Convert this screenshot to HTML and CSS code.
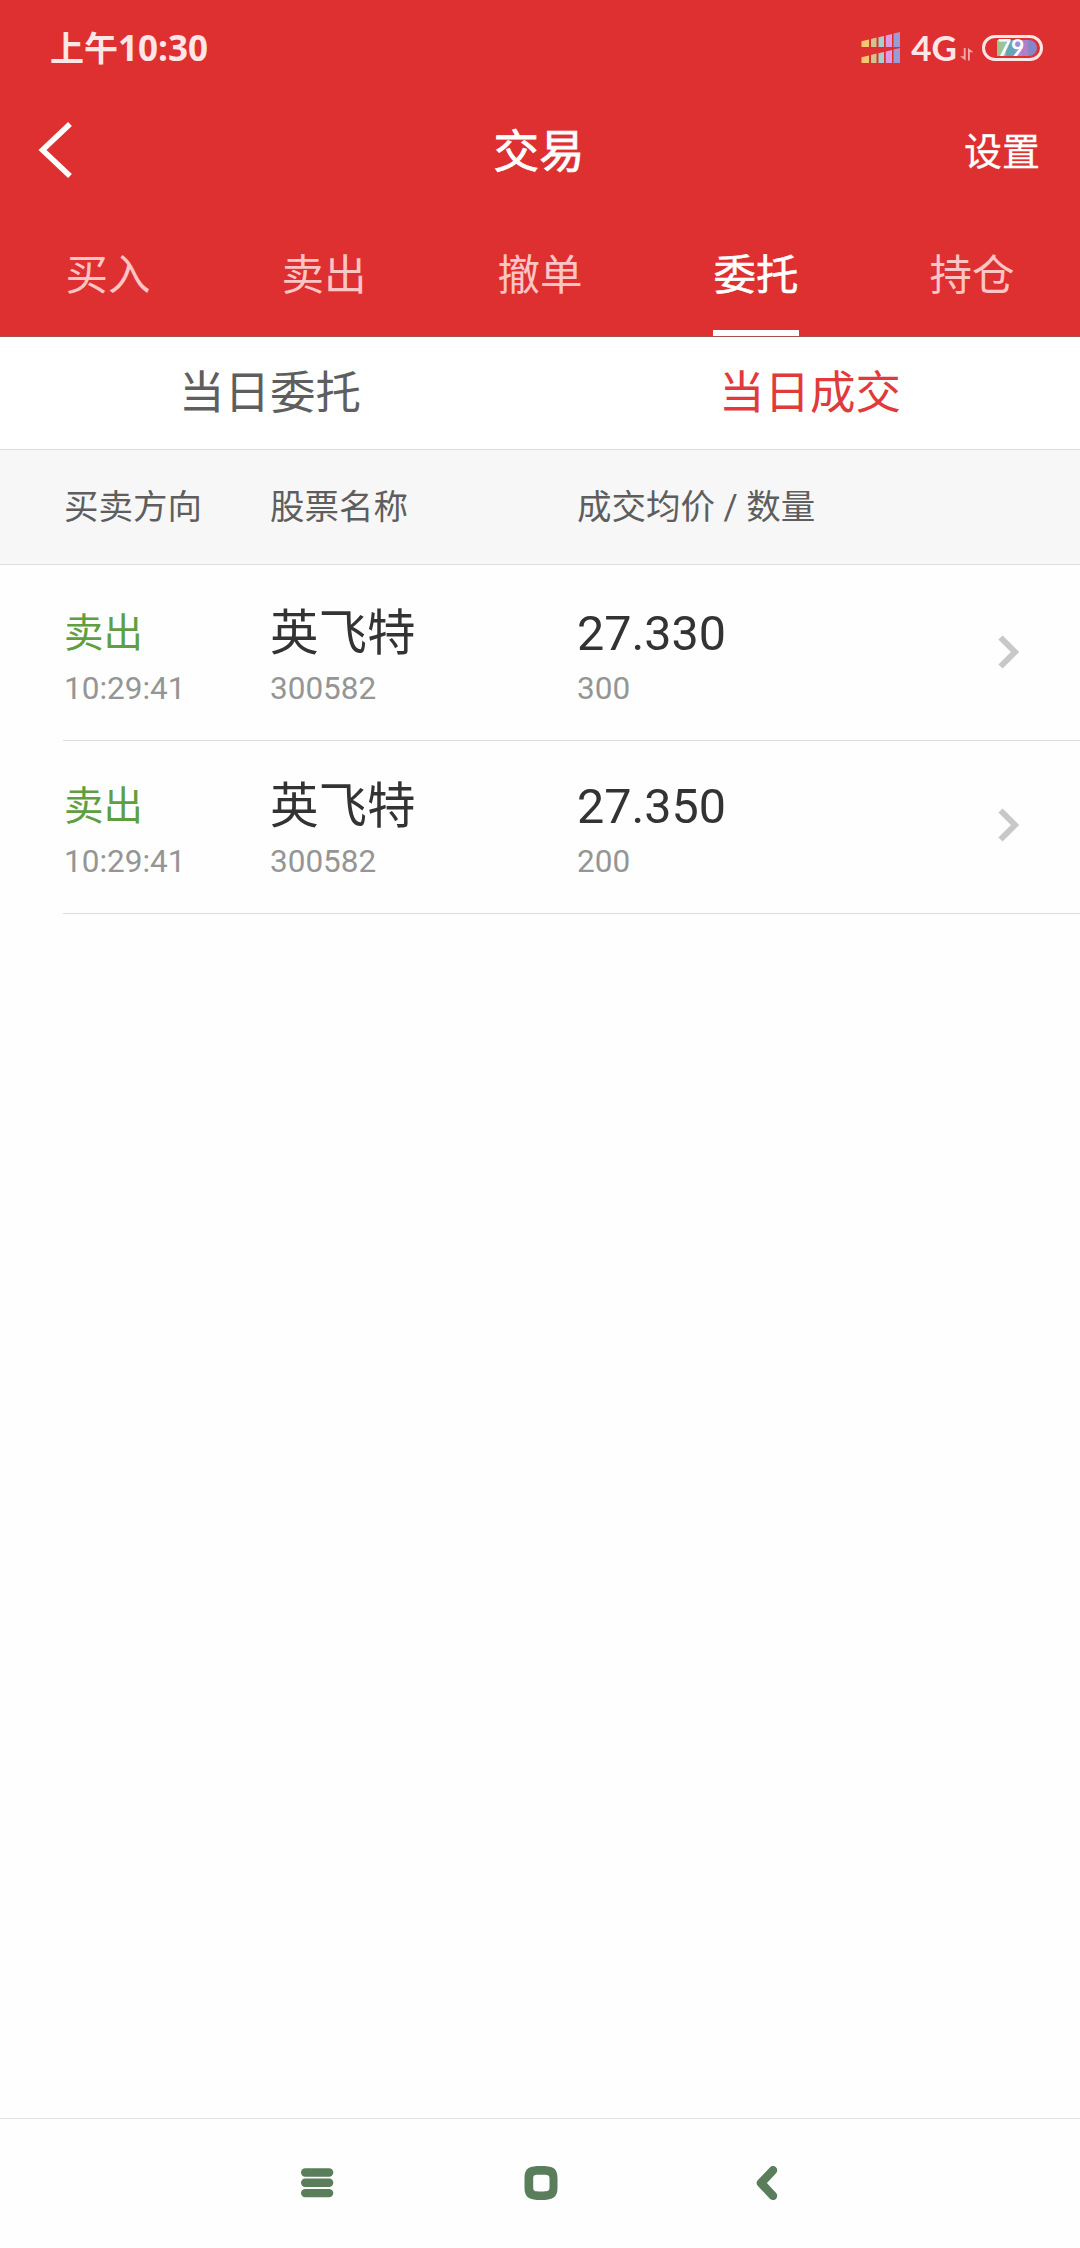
FILE: index.html
```html
<!DOCTYPE html>
<html lang="zh-CN">
  <head>
    <meta charset="UTF-8" />
    <meta name="viewport" content="width=device-width, initial-scale=1.0" />
    <title>交易</title>
    <link rel="stylesheet" href="styles.css">
  </head>

  <body>
    <header class="header">
      <!-- Status Bar -->
      <div class="status-bar">
        <div class="status-time">上午<span class="latin">10:30</span></div>
        <div class="status-icons">
          <svg class="signal" width="39" height="32" viewBox="0 0 39 32">
            <path fill="#f9c66f" d="M0.5 9.2 8 7.5V15H.5zM0.5 25.2 8 23.5V31H.5z" />
            <path fill="#cfc58d" d="M10 7 15.500 5.500V15H10zM10 23 15.500 21.500V31H10z" />
            <path fill="#a9cfcb" d="M17.500 5.200 23 4V15h-5.500zM17.500 21.200 23 20V31h-5.500z" />
            <path fill="#dd9be0" d="M24.800 3.400 31 2V15h-6.200zM24.800 19.400 31 18V31h-6.200z" />
            <path fill="#9c9bd6" d="M32.500 1.600 39 0V15h-6.500zM32.500 17.600 39 16V31h-6.500z" />
          </svg>
          <span class="network">4G</span>
          <svg class="traffic" width="14" height="13" viewBox="0 0 14 13">
            <path fill="#f5a9aa" d="M3.800 0H5.600V12.500L0 8.200H3.800zM8 0 13.500 4.300H9.800V12.500H8z" />
          </svg>
          <div class="battery">
            <div class="battery-level"></div>
            <span class="battery-text">79</span>
          </div>
        </div>
      </div>

      <!-- Title Bar -->
      <div class="title-bar">
        <svg class="back" width="36" height="58" viewBox="0 0 36 58">
          <path fill="none" stroke="#fff" stroke-width="5.500" d="M32 3 4.500 29 32 55" />
        </svg>
        <h1>交易</h1>
        <a class="settings">设置</a>
      </div>

      <!-- Main Tabs -->
      <nav class="tabs">
        <a class="tab"><span>买入</span></a>
        <a class="tab"><span>卖出</span></a>
        <a class="tab"><span>撤单</span></a>
        <a class="tab active"><span>委托</span></a>
        <a class="tab"><span>持仓</span></a>
      </nav>
    </header>

    <!-- Sub Tabs -->
    <div class="sub-tabs">
      <a class="sub-tab">当日委托</a>
      <a class="sub-tab active">当日成交</a>
    </div>

    <div class="list-head">
      <span>买卖方向</span>
      <span>股票名称</span>
      <span>成交均价 / 数量</span>
    </div>

    <!-- Deal List -->
    <main class="list">
      <div class="row">
        <div class="cell">
          <div class="main side">卖出</div>
          <div class="sub">10:29:41</div>
        </div>
        <div class="cell">
          <div class="main">英飞特</div>
          <div class="sub">300582</div>
        </div>
        <div class="cell">
          <div class="main">27.330</div>
          <div class="sub">300</div>
        </div>
        <svg class="chevron" width="22" height="34" viewBox="0 0 22 34">
          <path fill="none" stroke="#c8c8c8" stroke-width="6" d="M2.500 2.500 17 17 2.500 31.500" />
        </svg>
      </div>
      <div class="row">
        <div class="cell">
          <div class="main side">卖出</div>
          <div class="sub">10:29:41</div>
        </div>
        <div class="cell">
          <div class="main">英飞特</div>
          <div class="sub">300582</div>
        </div>
        <div class="cell">
          <div class="main">27.350</div>
          <div class="sub">200</div>
        </div>
        <svg class="chevron" width="22" height="34" viewBox="0 0 22 34">
          <path fill="none" stroke="#c8c8c8" stroke-width="6" d="M2.500 2.500 17 17 2.500 31.500" />
        </svg>
      </div>
    </main>

    <!-- System Navigation -->
    <footer class="nav-bar">
      <svg width="34" height="34" viewBox="0 0 34 34">
        <g fill="#5a7d5c">
          <rect x="1" y="2.300" width="32.300" height="8.400" rx="4.200" />
          <rect x="1" y="12.600" width="32.300" height="8.400" rx="4.200" />
          <rect x="1" y="22.900" width="32.300" height="8.400" rx="4.200" />
        </g>
      </svg>
      <svg width="34" height="34" viewBox="0 0 34 34">
        <path fill="#5a7d5c" fill-rule="evenodd" d="M17 0C28 0 33.500 1.500 33.500 12V22C33.500 32 28 34 17 34S.5 32 .5 22V12C.5 1.500 6 0 17 0zM17 8.800C10 8.800 9.200 9 9.200 13V21C9.200 25 10 25.500 17 25.500S25.500 25 25.500 21V13C25.500 9 24 8.800 17 8.800z" />
      </svg>
      <svg width="34" height="34" viewBox="0 0 34 34">
        <path fill="none" stroke="#5a7d5c" stroke-width="8.500" stroke-linecap="round" stroke-linejoin="round" d="M26 4.300 14 17 26 29.800" />
      </svg>
    </footer>
  </body>
</html>
```

FILE: styles.css
```css
/* Global Styles */
* {
  box-sizing: border-box;
}

body {
  font-family: Roboto, "Noto Sans CJK SC", sans-serif;
  background-color: #fefefe;
  color: #333;
  margin: 0;
  min-height: 100vh;
  display: flex;
  flex-direction: column;
}

svg {
  display: block;
}

/* Header */
.header {
  background-color: #de3031;
  color: #fff;
  height: 337px;
  border-bottom: 1px solid #a85050;
}

/* Status Bar */
.status-bar {
  height: 96px;
  padding: 0 37px 0 50px;
  display: flex;
  justify-content: space-between;
  align-items: center;
  color: #ffe6e6;
}

.status-time {
  font-size: 34px;
  font-weight: 700;
  line-height: 40px;
}

.status-time .latin {
  font-family: "Open Sans", sans-serif;
  font-size: 35px;
}

.status-icons {
  display: flex;
  align-items: center;
}

.network {
  font-family: Lato, sans-serif;
  font-size: 35px;
  font-weight: 700;
  line-height: 40px;
  margin: -2px 0 0 11px;
}

.traffic {
  margin: 12px 8px 0 3px;
}

/* Battery */
.battery {
  width: 61px;
  height: 26px;
  padding: 2px 3px;
  border: 3px solid #ffe6e6;
  border-radius: 13px;
  position: relative;
}

.battery-level {
  height: 16px;
  margin-left: 9px;
  border-radius: 0 8px 8px 0;
  background: linear-gradient(to right, #9ac58e 0 9px, #65a5b8 9px 18px, #9b8fdd 18px 25px, #b07fc8 25px 31px, #8585c8 31px);
}

.battery-text {
  position: absolute;
  left: 0;
  right: 3px;
  top: -1px;
  text-align: center;
  font-family: Lato, sans-serif;
  font-size: 23px;
  font-weight: 700;
  line-height: 20px;
  color: #fff;
}

/* Title Bar */
.title-bar {
  height: 108px;
  padding: 0 40px 0 38px;
  display: grid;
  grid-template-columns: 1fr auto 1fr;
  align-items: center;
}

h1 {
  margin: 5px 0 0;
  font-size: 45.5px;
  font-weight: 400;
  line-height: 60px;
  -webkit-text-stroke: 0.8px currentColor;
}

.settings {
  justify-self: end;
  margin-top: 3px;
  font-size: 38px;
  line-height: 60px;
  -webkit-text-stroke: 0.3px currentColor;
}

/* Main Tabs */
.tabs {
  height: 132px;
  display: flex;
}

.tab {
  flex: 1;
  display: flex;
  justify-content: center;
  color: #ffc4c4;
}

.tab span {
  font-size: 42.5px;
  line-height: 143px;
}

.tab.active {
  color: #fff;
}

.tab.active span {
  border-bottom: 6px solid #fff;
  height: 132px;
  -webkit-text-stroke: 0.5px currentColor;
}

/* Sub Tabs */
.sub-tabs {
  height: 113px;
  display: flex;
  background-color: #fff;
  border-bottom: 1px solid #ddd;
}

.sub-tab {
  flex: 1;
  text-align: center;
  font-size: 45.5px;
  line-height: 114px;
  color: #5e5e5e;
}

.sub-tab.active {
  color: #e03a3c;
}

/* List */
.list-head,
.row {
  display: grid;
  grid-template-columns: 206px 307px 1fr auto;
}

.list-head {
  height: 115px;
  padding-left: 64px;
  background-color: #f7f7f7;
  border-bottom: 1px solid #ddd;
  font-size: 34.5px;
  line-height: 114px;
  color: #5e5e5e;
}

.list {
  flex: 1;
  padding: 3px 0 0 63px;
}

.row {
  height: 173px;
  padding: 38px 60px 0 1px;
  border-bottom: 1px solid #ddd;
}

.main {
  font-size: 48.5px;
  line-height: 56px;
}

.main.side {
  font-size: 39.5px;
  color: #5f9e41;
}

.sub {
  margin-top: 7px;
  font-size: 31.5px;
  line-height: 40px;
  color: #959595;
}

.chevron {
  margin-top: 29px;
}

/* System Navigation */
.nav-bar {
  height: 130px;
  padding: 0 299px 2px 300px;
  border-top: 1px solid #e2e2e2;
  display: flex;
  justify-content: space-between;
  align-items: center;
}
```
